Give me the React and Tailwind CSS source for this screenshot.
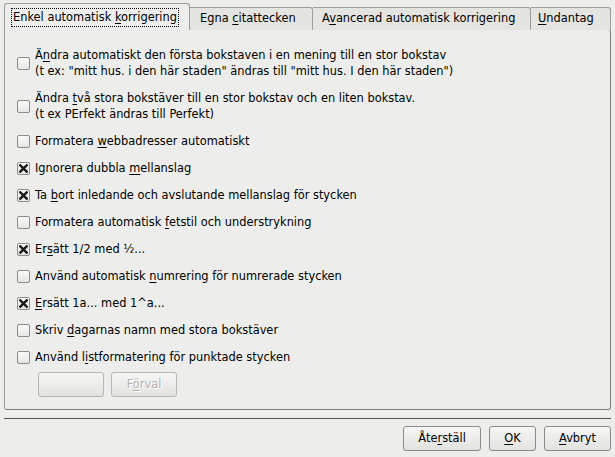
import React from 'react';

// Autokorrigering dialog – first tab
const font = { fontFamily: '"DejaVu Sans", "Liberation Sans", sans-serif' };

const Mn = ({ children }) => <u className="underline underline-offset-2">{children}</u>;

const Check = ({ checked }) => (
  <span className="w-[13px] h-[13px] shrink-0 border border-[#8c8c8a] rounded-[2px] bg-gradient-to-b from-[#fafaf9] to-[#e6e6e3] flex items-center justify-center">
    {checked && (
      <svg width="9" height="9" viewBox="0 0 9 9">
        <path d="M1.3 1.3 L7.7 7.7 M7.7 1.3 L1.3 7.7" stroke="#1a1a1a" strokeWidth="2.4" strokeLinecap="square" />
      </svg>
    )}
  </span>
);

const options = [
  { checked: false, lines: [<>Ä<Mn>n</Mn>dra automatiskt den första bokstaven i en mening till en stor bokstav</>, <>(t ex: "mitt hus. i den här staden" ändras till "mitt hus. I den här staden")</>] },
  { checked: false, lines: [<>Ändra <Mn>t</Mn>vå stora bokstäver till en stor bokstav och en liten bokstav.</>, <>(t ex PErfekt ändras till Perfekt)</>] },
  { checked: false, lines: [<>Formatera <Mn>w</Mn>ebbadresser automatiskt</>] },
  { checked: true, lines: [<>Ignorera dubbla <Mn>m</Mn>ellanslag</>] },
  { checked: true, lines: [<>Ta <Mn>b</Mn>ort inledande och avslutande mellanslag för stycken</>] },
  { checked: false, lines: [<>Formatera automatisk <Mn>f</Mn>etstil och understrykning</>] },
  { checked: true, lines: [<>Er<Mn>s</Mn>ätt 1/2 med ½...</>] },
  { checked: false, lines: [<>Använd automatisk <Mn>n</Mn>umrering för numrerade stycken</>] },
  { checked: true, lines: [<><Mn>E</Mn>rsätt 1a... med 1^a...</>] },
  { checked: false, lines: [<>Skriv <Mn>d</Mn>agarnas namn med stora bokstäver</>] },
  { checked: false, lines: [<>Använd l<Mn>i</Mn>stformatering för punktade stycken</>] },
];

const Button = ({ children, className = '', disabled }) => (
  <div
    className={`h-[25px] flex items-center justify-center border rounded-[3px] bg-gradient-to-b from-[#f6f6f4] to-[#e2e2df] ${
      disabled ? 'border-[#b6b6b3] text-[#b4b4b1]' : 'border-[#8c8c89] text-black'
    } ${className}`}
  >
    <span>{children}</span>
  </div>
);

const Tab = ({ children, className = '' }) => (
  <div className={`h-[23px] border border-l-0 border-b-0 border-[#9c9c99] rounded-tr-[3px] bg-[#e4e4e1] flex items-center whitespace-nowrap ${className}`}>
    <span>{children}</span>
  </div>
);

export default function App() {
  return (
    <div className="w-[615px] h-[457px] bg-[#edeeeb] text-[11.4px] text-black overflow-hidden" style={font}>
      <div className="px-[4px] pt-[4px]">
        {/* tabs */}
        <div className="flex items-end h-[26px] relative z-10">
          <div className="h-[27px] w-[186px] border border-b-0 border-[#9c9c99] rounded-t-[3px] bg-[#edeeeb] flex items-center px-[6px] whitespace-nowrap">
            <span className="border border-dotted border-black px-[1px] leading-[17px]">
              Enkel automatisk <Mn>k</Mn>orrigering
            </span>
          </div>
          <Tab className="w-[123px] pl-[10px]">Egna <Mn>c</Mn>itattecken</Tab>
          <Tab className="w-[218px] pl-[9px]">A<Mn>v</Mn>ancerad automatisk korrigering</Tab>
          <Tab className="w-[80px] pl-[7px]"><Mn>U</Mn>ndantag</Tab>
        </div>

        {/* panel */}
        <div className="h-[381px] border border-[#9c9c99] border-r-[#7d7d7a] border-b-[#7d7d7a] rounded-b-[3px] rounded-tr-[3px] -mt-px pt-[17px] pl-[12px]">
          <div className="flex flex-col gap-[11px]">
            {options.map((o, i) => (
              <div key={i} className="flex items-center gap-[5px]">
                <Check checked={o.checked} />
                <div className="flex flex-col leading-[16px]">
                  {o.lines.map((l, j) => (
                    <span key={j} className="whitespace-nowrap">{l}</span>
                  ))}
                </div>
              </div>
            ))}
          </div>
          <div className="flex gap-[7px] pl-[21px] mt-[7px]">
            <Button disabled className="w-[66px]" />
            <Button disabled className="w-[66px] [text-shadow:1px_1px_0_#ffffff]">
              F<Mn>ö</Mn>rval
            </Button>
          </div>
        </div>

        {/* separator */}
        <div className="mt-[8px] h-px bg-[#5a5a58]" />

        {/* footer buttons */}
        <div className="flex justify-end gap-[8px] mt-[7px]">
          <Button className="w-[78px]">Åte<Mn>r</Mn>ställ</Button>
          <Button className="w-[47px]"><Mn>O</Mn>K</Button>
          <Button className="w-[67px]"><Mn>A</Mn>vbryt</Button>
        </div>
      </div>
    </div>
  );
}
